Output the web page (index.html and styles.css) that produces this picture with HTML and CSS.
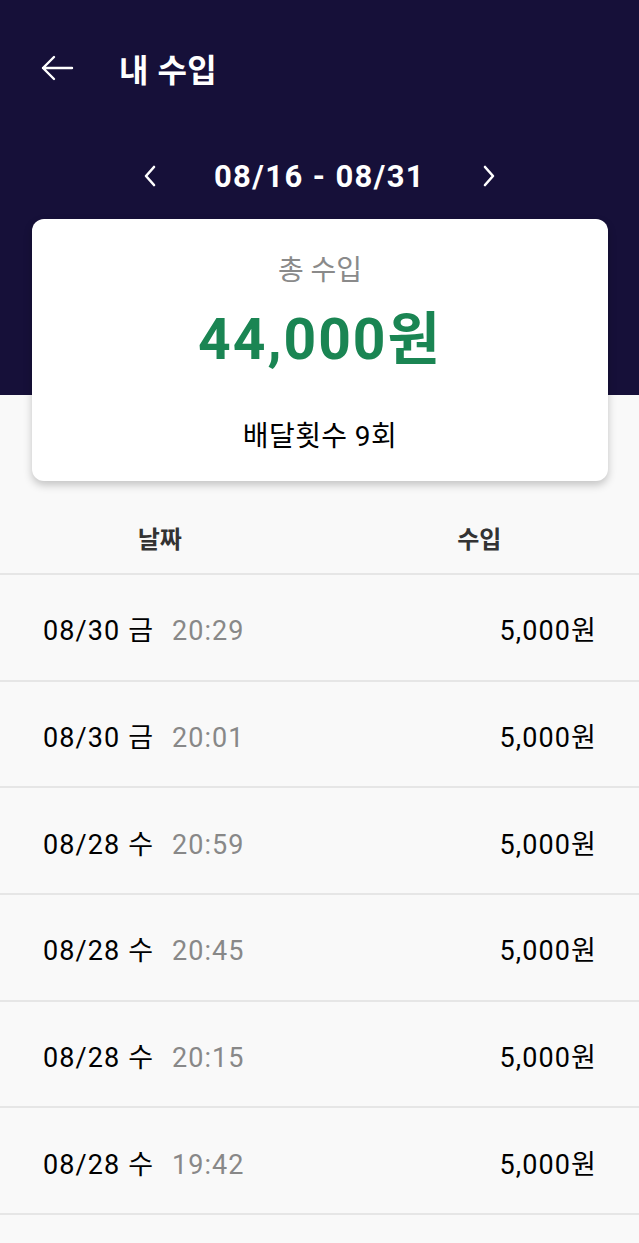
FILE: index.html
```html
<!DOCTYPE html>
<html lang="ko">
<head>
    <meta charset="UTF-8">
    <meta name="viewport" content="width=device-width, initial-scale=1.0">
    <title>내 수입</title>
    <link rel="stylesheet" href="styles.css">
</head>
<body>
<div class="header">
    <div class="topbar">
        <svg class="back" width="34" height="26" viewBox="0 0 34 26">
            <path d="M32 13H3M14 2L3 13l11 11" fill="none" stroke="#fff" stroke-width="2.4" stroke-linecap="round" stroke-linejoin="round"/>
        </svg>
        <h1>내 수입</h1>
    </div>
    <div class="range">
        <svg width="14" height="24" viewBox="0 0 14 24">
            <path d="M11 3L3 12l8 9" fill="none" stroke="#fff" stroke-width="2.6" stroke-linecap="round" stroke-linejoin="round"/>
        </svg>
        <span class="range-text">08/16 - 08/31</span>
        <svg width="14" height="24" viewBox="0 0 14 24">
            <path d="M3 3l8 9-8 9" fill="none" stroke="#fff" stroke-width="2.6" stroke-linecap="round" stroke-linejoin="round"/>
        </svg>
    </div>
</div>

<div class="card">
    <div class="card-label">총 수입</div>
    <div class="card-total">44,000원</div>
    <div class="card-count">배달횟수 9회</div>
</div>

<div class="table">
    <div class="table-head">
        <span>날짜</span>
        <span>수입</span>
    </div>
    <div class="row">
        <span class="date">08/30 금 <em>20:29</em></span>
        <span class="amount">5,000원</span>
    </div>
    <div class="row">
        <span class="date">08/30 금 <em>20:01</em></span>
        <span class="amount">5,000원</span>
    </div>
    <div class="row">
        <span class="date">08/28 수 <em>20:59</em></span>
        <span class="amount">5,000원</span>
    </div>
    <div class="row">
        <span class="date">08/28 수 <em>20:45</em></span>
        <span class="amount">5,000원</span>
    </div>
    <div class="row">
        <span class="date">08/28 수 <em>20:15</em></span>
        <span class="amount">5,000원</span>
    </div>
    <div class="row">
        <span class="date">08/28 수 <em>19:42</em></span>
        <span class="amount">5,000원</span>
    </div>
</div>
</body>
</html>
```

FILE: styles.css
```css
body {
    margin: 0;
    font-family: Roboto, "Noto Sans CJK KR", sans-serif;
    background-color: #f9f9f9;
    color: #000;
}
.header {
    background-color: #161039;
    color: #fff;
    height: 395px;
}
.topbar {
    height: 136px;
    display: flex;
    align-items: center;
    padding-left: 40px;
}
.back {
    margin-right: 45px;
}
.topbar h1 {
    margin: 0;
    font-size: 32px;
    font-weight: 700;
    letter-spacing: 0.5px;
}
.range {
    height: 80px;
    display: flex;
    align-items: center;
    justify-content: center;
    gap: 57px;
}
.range-text {
    font-size: 31px;
    font-weight: 700;
    letter-spacing: 1.4px;
}
.card {
    margin: -176px 31px 0 32px;
    height: 262px;
    box-sizing: border-box;
    background: #fff;
    border-radius: 12px;
    box-shadow: 0 4px 8px rgba(0, 0, 0, 0.22);
    text-align: center;
    padding-top: 35px;
    position: relative;
}
.card-label {
    font-size: 28px;
    color: #8a8a8a;
    line-height: 34px;
}
.card-total {
    font-size: 57px;
    font-weight: 700;
    color: #1a8553;
    line-height: 70px;
    margin-top: 17px;
    letter-spacing: 2px;
}
.card-count {
    font-size: 28px;
    line-height: 36px;
    margin-top: 44px;
    letter-spacing: 0.4px;
}
.table-head {
    display: grid;
    grid-template-columns: 1fr 1fr;
    text-align: center;
    height: 94px;
    box-sizing: border-box;
    align-items: center;
    font-size: 24px;
    font-weight: 700;
    color: #333;
    border-bottom: 2px solid #e6e6e6;
    padding-top: 20px;
}
.row {
    display: flex;
    justify-content: space-between;
    align-items: center;
    height: 106.7px;
    box-sizing: border-box;
    padding: 3px 42px 0 43px;
    border-bottom: 2px solid #e6e6e6;
    font-size: 27px;
    letter-spacing: 1.1px;
}
.date em {
    font-style: normal;
    color: #888;
    margin-left: 10px;
}
```
